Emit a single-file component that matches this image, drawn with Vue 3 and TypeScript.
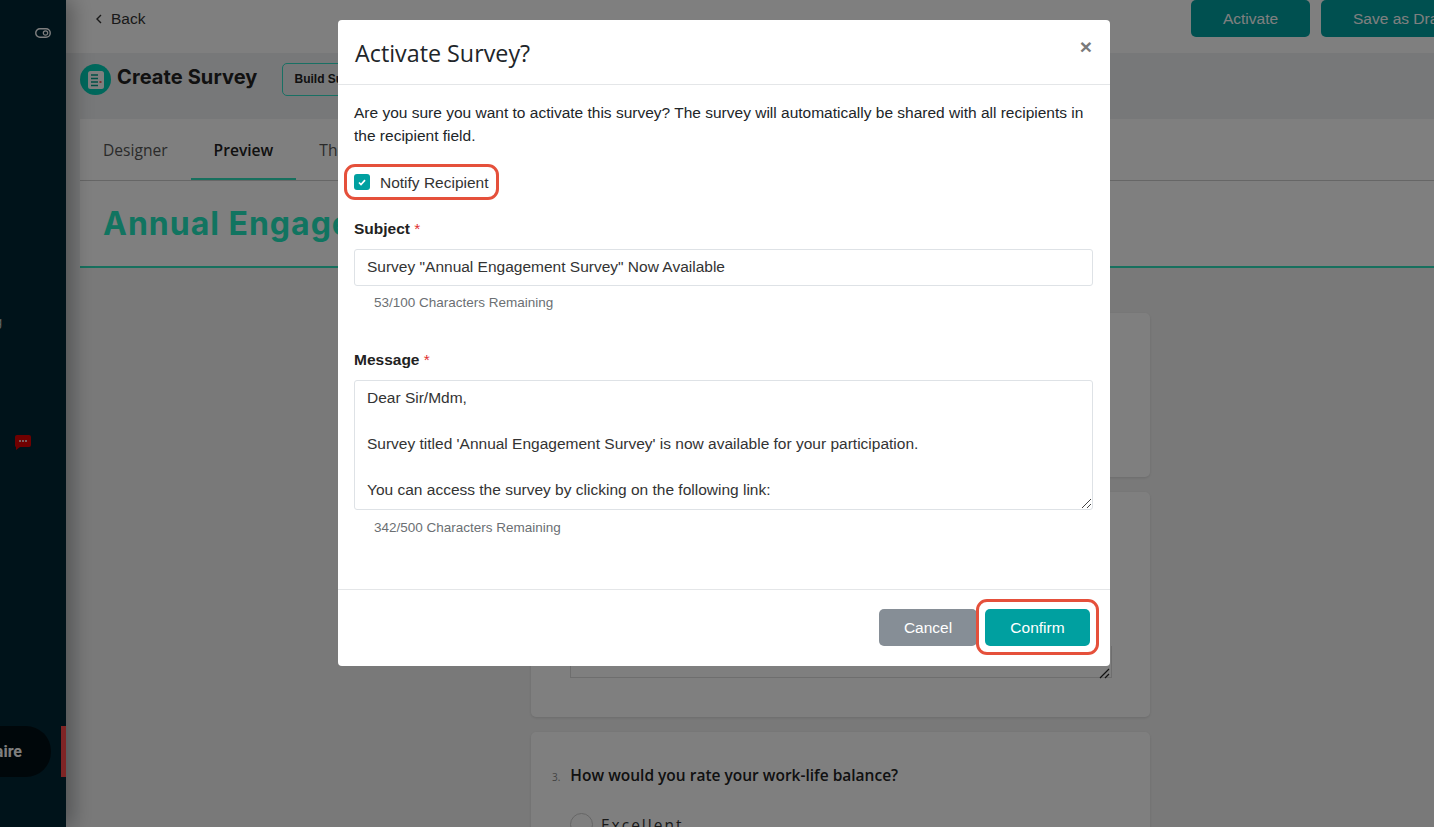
<script setup lang="ts">
const subject = 'Survey "Annual Engagement Survey" Now Available'
const message = `Dear Sir/Mdm,

Survey titled 'Annual Engagement Survey' is now available for your participation.

You can access the survey by clicking on the following link:`
</script>

<template>
  <div class="page">
    <aside class="sidebar">
      <svg class="side-toggle" width="16" height="10" viewBox="0 0 16 10" fill="none">
        <rect x="0.75" y="0.75" width="14.5" height="8.5" rx="4.25" stroke="#fff" stroke-width="1.4" />
        <circle cx="10.5" cy="5" r="2.2" stroke="#fff" stroke-width="1.2" />
      </svg>
      <span class="side-cut">Billing</span>
      <svg class="side-chat" width="16" height="15" viewBox="0 0 16 15">
        <path d="M2 0h12a2 2 0 0 1 2 2v8a2 2 0 0 1-2 2H5l-4 3V12a2 2 0 0 1-1-2V2a2 2 0 0 1 2-2z" fill="#e00000" />
        <circle cx="5" cy="6" r="1" fill="#fff" />
        <circle cx="8" cy="6" r="1" fill="#fff" />
        <circle cx="11" cy="6" r="1" fill="#fff" />
      </svg>
      <div class="side-row">
        <div class="side-pill"><span>Questionnaire</span></div>
        <div class="side-mark"></div>
      </div>
    </aside>

    <main class="main">
      <header class="topbar">
        <div class="back">
          <svg width="8" height="10" viewBox="0 0 8 10" fill="none">
            <path d="M6 1 2 5l4 4" stroke="#333" stroke-width="1.4" />
          </svg>
          <span>Back</span>
        </div>
        <div class="top-actions">
          <button class="top-btn top-btn--activate">Activate</button>
          <button class="top-btn top-btn--draft">Save as Draft</button>
        </div>
      </header>

      <section class="titlebar">
        <div class="title-icon">
          <svg width="16" height="18" viewBox="0 0 16 18">
            <rect width="16" height="18" rx="2.5" fill="#fff" />
            <path d="M3 4h7M3 7.500h7M3 11h7M3 14.500h7" stroke="#00a08a" stroke-width="1.4" />
            <path d="M11.500 11h2" stroke="#f05050" stroke-width="1.8" />
          </svg>
        </div>
        <h1 class="page-title">Create Survey</h1>
        <div class="build-chip">Build Survey</div>
      </section>

      <section class="panel">
        <nav class="tabs">
          <span class="tab">Designer</span>
          <span class="tab tab--active">Preview</span>
          <span class="tab">Theme</span>
        </nav>
        <div class="survey-head">
          <h2 class="survey-title">Annual Engagement Survey</h2>
        </div>
        <div class="questions">
          <div class="q-card q-card--one"></div>
          <div class="q-card q-card--two">
            <div class="q-area"></div>
            <svg class="q-grip" width="12" height="12" viewBox="0 0 12 12" fill="none">
              <path d="M2 11 11 2M7 11l4-4" stroke="#222" stroke-width="1.200" />
            </svg>
          </div>
          <div class="q-card q-card--three">
            <div class="q-line">
              <span class="q-num">3.</span>
              <span class="q-text">How would you rate your work-life balance?</span>
            </div>
            <div class="q-option">
              <span class="q-radio"></span>
              <span>Excellent</span>
            </div>
          </div>
        </div>
      </section>
    </main>

    <div class="backdrop"></div>

    <div class="modal">
      <div class="modal-head">
        <h3 class="modal-title">Activate Survey?</h3>
        <span class="modal-close">×</span>
      </div>

      <div class="modal-body">
        <p class="intro">
          Are you sure you want to activate this survey? The survey will automatically be shared with all recipients in
          the recipient field.
        </p>

        <label class="notify">
          <span class="check">
            <svg width="8" height="7" viewBox="0 0 8 7" fill="none">
              <path d="M1 3.500 3 5.500 7 1.200" stroke="#fff" stroke-width="1.700" />
            </svg>
          </span>
          <span>Notify Recipient</span>
          <span class="ring ring--notify"></span>
        </label>

        <div class="field field--subject">
          <div class="field-label">Subject <em>*</em></div>
          <div class="field-input">{{ subject }}</div>
          <div class="field-hint">53/100 Characters Remaining</div>
        </div>

        <div class="field field--message">
          <div class="field-label">Message <em>*</em></div>
          <div class="field-area">
            <div class="field-text">{{ message }}</div>
            <svg class="area-grip" width="12" height="12" viewBox="0 0 12 12" fill="none">
              <path d="M2 11 11 2M7 11l4-4" stroke="#444" stroke-width="1" />
            </svg>
          </div>
          <div class="field-hint field-hint--last">342/500 Characters Remaining</div>
        </div>
      </div>

      <div class="modal-foot">
        <button class="btn btn--cancel">Cancel</button>
        <button class="btn btn--confirm">
          Confirm
          <span class="ring ring--confirm"></span>
        </button>
      </div>
    </div>
  </div>
</template>

<style>
html,
body {
  margin: 0;
  background: #fff;
}
</style>

<style scoped>
.page {
  position: relative;
  display: flex;
  width: 1434px;
  height: 827px;
  overflow: hidden;
  font-family: "Liberation Sans", Arial, sans-serif;
  background: #fff;
}

/* sidebar */
.sidebar {
  position: relative;
  z-index: 1;
  flex: 0 0 66px;
  display: flex;
  flex-direction: column;
  background: #002634;
  box-shadow: 6px 0 20px rgba(0, 0, 0, 0.32);
}
.side-toggle {
  margin: 28px 0 0 35px;
}
.side-cut {
  margin: 277px 0 0 -30px;
  font-size: 12px;
  line-height: 14px;
  color: #c8d0d4;
}
.side-chat {
  margin: 106px 0 0 15px;
}
.side-row {
  display: flex;
  align-items: center;
  margin-top: 276px;
}
.side-pill {
  flex: 0 0 51px;
  display: flex;
  justify-content: flex-end;
  align-items: center;
  height: 51px;
  overflow: hidden;
  padding-right: 29px;
  box-sizing: border-box;
  border-radius: 0 25px 25px 0;
  background: #000f15;
  color: #fff;
  font: 700 16px Roboto, sans-serif;
  white-space: nowrap;
}
.side-mark {
  width: 5px;
  height: 51px;
  margin-left: 10px;
  background: #ff4a4a;
}

/* main */
.main {
  flex: 1;
  min-width: 0;
  display: flex;
  flex-direction: column;
  background: #eef0f2;
}
.topbar {
  flex: 0 0 53px;
  display: flex;
  justify-content: space-between;
  box-sizing: border-box;
  padding: 0 0 0 29px;
  overflow: hidden;
  background: #fff;
}
.back {
  display: flex;
  align-items: center;
  gap: 8px;
  height: 37px;
  font-size: 15.500px;
  color: #333;
}
.top-actions {
  display: flex;
  gap: 11px;
}
.top-btn {
  height: 37px;
  border: 0;
  border-radius: 5px;
  background: #00a0a0;
  color: #fff;
  font: 15.500px "Liberation Sans", Arial, sans-serif;
  padding: 0;
}
.top-btn--activate {
  width: 119px;
}
.top-btn--draft {
  width: 150px;
  margin-right: -37px;
  white-space: nowrap;
  text-align: left;
  padding-left: 32px;
}
.titlebar {
  flex: 0 0 66px;
  display: flex;
  align-items: flex-start;
  padding: 0 0 0 14px;
}
.title-icon {
  width: 31px;
  height: 31px;
  margin-top: 11px;
  display: flex;
  align-items: center;
  justify-content: center;
  border-radius: 50%;
  background: #00d0b8;
}
.page-title {
  margin: 11px 0 0 6px;
  font: 700 20px/27px Inter, sans-serif;
  letter-spacing: 0.1px;
  color: #222;
  white-space: nowrap;
}
.build-chip {
  box-sizing: border-box;
  height: 33px;
  margin: 10px 0 0 25px;
  padding: 0 11px;
  border: 1px solid #30e0c8;
  border-radius: 5px;
  font: 700 12px/31px "Liberation Sans", Arial, sans-serif;
  color: #222;
  background: #eef0f2;
  white-space: nowrap;
}
.panel {
  flex: 1;
  min-height: 0;
  margin-left: 14px;
  display: flex;
  flex-direction: column;
  background: #fff;
}
.tabs {
  flex: none;
  display: flex;
  height: 62px;
  box-sizing: border-box;
  border-bottom: 1px solid #ccc;
  font: 15.600px "Open Sans", sans-serif;
}
.tab {
  padding: 0 23px;
  line-height: 62px;
  color: #555;
}
.tab--active {
  color: #222;
  font-weight: 600;
  border-bottom: 2px solid #2ee0bc;
  height: 61px;
  box-sizing: border-box;
}
.survey-head {
  flex: none;
  height: 87px;
  box-sizing: border-box;
  padding: 24px 0 0 23px;
  border-bottom: 2px solid #2ee0bc;
}
.survey-title {
  margin: 0;
  font: 700 32px/38px Inter, sans-serif;
  letter-spacing: 1px;
  color: #22e8c0;
  white-space: nowrap;
}
.questions {
  flex: 1;
  min-height: 0;
  display: flex;
  flex-direction: column;
  gap: 15px;
  padding: 45px 0 0 451px;
  background: #f3f3f3;
}
.q-card {
  position: relative;
  flex: none;
  width: 619px;
  box-sizing: border-box;
  border-radius: 5px;
  background: #fff;
  box-shadow: 0 1px 3px rgba(0, 0, 0, 0.12);
}
.q-card--one {
  height: 164px;
}
.q-card--two {
  height: 225px;
  padding: 154px 0 0 39px;
}
.q-area {
  width: 542px;
  height: 32px;
  box-sizing: border-box;
  border: 1px solid #ddd;
  border-top: 0;
}
.q-grip {
  position: absolute;
  left: 567px;
  top: 175px;
}
.q-card--three {
  height: 180px;
  padding: 32px 0 0 21px;
}
.q-line {
  display: flex;
  align-items: baseline;
  gap: 10px;
}
.q-num {
  font: 10px "Open Sans", sans-serif;
  color: #888;
}
.q-text {
  font: 600 15.500px/22px "Open Sans", sans-serif;
  color: #222;
}
.q-option {
  display: flex;
  align-items: center;
  gap: 8px;
  margin: 27px 0 0 18px;
  font: 15.500px "Open Sans", sans-serif;
  letter-spacing: 2px;
  color: #333;
}
.q-radio {
  width: 23px;
  height: 23px;
  border: 1px solid #ccc;
  border-radius: 50%;
  box-sizing: border-box;
}

/* overlay */
.backdrop {
  position: absolute;
  inset: 0;
  z-index: 2;
  background: rgba(0, 0, 0, 0.5);
}
.modal {
  position: absolute;
  z-index: 3;
  left: 338px;
  top: 20px;
  width: 772px;
  height: 646px;
  display: flex;
  flex-direction: column;
  background: #fff;
  border-radius: 4px;
  color: #222;
}
.modal-head {
  flex: 0 0 65px;
  display: flex;
  justify-content: space-between;
  align-items: flex-start;
  box-sizing: border-box;
  padding: 0 18px 0 17px;
  border-bottom: 1px solid #e4e6e8;
}
.modal-title {
  margin: 18px 0 0;
  font: 400 23.300px/30px "Open Sans", sans-serif;
  color: #212529;
}
.modal-close {
  margin-top: 14px;
  font: 700 21px/26px "Liberation Sans", Arial, sans-serif;
  color: #7a7a7a;
}
.modal-body {
  flex: 1;
  min-height: 0;
  padding: 16px 17px 0 16px;
}
.intro {
  margin: 0;
  font-size: 15.500px;
  line-height: 23px;
  color: #212529;
}
.notify {
  position: relative;
  display: flex;
  align-items: center;
  gap: 10px;
  width: max-content;
  height: 22px;
  margin: 25px 0 0 0;
  font-size: 15.500px;
  color: #333;
}
.check {
  display: flex;
  align-items: center;
  justify-content: center;
  width: 16px;
  height: 16px;
  margin-bottom: 2px;
  border-radius: 3px;
  background: #00a0a0;
}
.ring {
  position: absolute;
  box-sizing: border-box;
  border: 3px solid #e5503b;
  pointer-events: none;
}
.ring--notify {
  left: -10px;
  top: -8px;
  width: 155px;
  height: 36px;
  border-radius: 11px;
}
.field-label {
  font-size: 15.500px;
  font-weight: 700;
  line-height: 20px;
  color: #222;
}
.field-label em {
  font-style: normal;
  font-weight: 400;
  color: #e03030;
}
.field--subject {
  margin-top: 25px;
}
.field-input {
  box-sizing: border-box;
  height: 37px;
  margin-top: 10px;
  padding: 0 12px;
  border: 1px solid #dee2e6;
  border-radius: 3px;
  font-size: 15.500px;
  line-height: 33px;
  color: #333;
}
.field-hint {
  margin: 9px 0 0 20px;
  font-size: 13.500px;
  line-height: 16px;
  color: #6b6f73;
}
.field-hint--last {
  margin-top: 10px;
}
.field--message {
  margin-top: 39px;
}
.field-area {
  position: relative;
  box-sizing: border-box;
  height: 130px;
  margin-top: 10px;
  padding: 5px 12px;
  overflow: hidden;
  border: 1px solid #dee2e6;
  border-radius: 3px;
}
.field-text {
  font-size: 15.500px;
  line-height: 23px;
  color: #333;
  white-space: pre-wrap;
}
.area-grip {
  position: absolute;
  right: 0;
  bottom: 0;
}
.modal-foot {
  flex: 0 0 77px;
  display: flex;
  justify-content: flex-end;
  gap: 8px;
  box-sizing: border-box;
  padding: 19px 20px 0 0;
  border-top: 1px solid #e4e6e8;
}
.btn {
  position: relative;
  height: 37px;
  border: 0;
  border-radius: 5px;
  color: #fff;
  font: 15.500px "Liberation Sans", Arial, sans-serif;
}
.btn--cancel {
  width: 98px;
  background: #868e96;
}
.btn--confirm {
  width: 105px;
  background: #00a0a0;
}
.ring--confirm {
  left: -9px;
  top: -10px;
  width: 123px;
  height: 56px;
  border-radius: 11px;
}
</style>
